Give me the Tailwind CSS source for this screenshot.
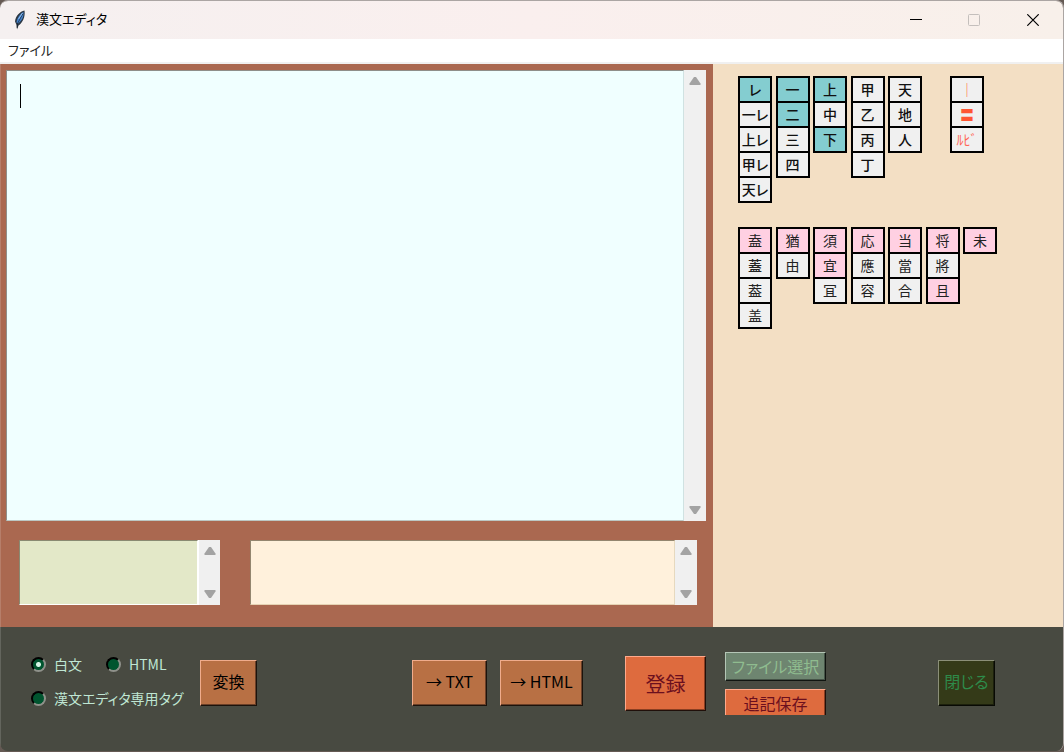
<!DOCTYPE html>
<html lang="ja">
  <head>
    <meta charset="UTF-8" />
    <meta name="viewport" content="width=device-width, initial-scale=1.0" />
    <title>漢文エディタ</title>
    <script src="https://cdn.jsdelivr.net/npm/@tailwindcss/browser@4"></script>
  </head>
  <body
    class="bg-[#655a54] font-['Noto_Sans_CJK_JP',sans-serif] [font-feature-settings:'palt']"
  >
    <div
      class="min-h-[calc(100vh-1px)] flex flex-col rounded-lg overflow-hidden border-t border-r border-[#aba5a3]"
    >
      <!-- Title bar -->
      <header
        class="h-[38px] flex items-center justify-between pl-3 bg-linear-to-r from-[#f5f0f0] via-[#faefee] to-[#f8f0ea]"
      >
        <div class="flex items-center gap-2">
          <svg class="w-4 h-5" viewBox="0 0 16 20">
            <path
              d="M12.5 0.5C8 1.5 3.5 6 3 11.5L4.5 15L5 19.5L6.5 15.5C10.5 13 13.5 7 12.5 0.5Z"
              fill="#2c3844"
            />
            <path
              d="M11.5 2C8 4 5 8 4.5 12.5L6 13.5C9.5 11 12 7 11.5 2Z"
              fill="#4383cf"
            />
            <path d="M11 3.5L5.5 13.5L5.2 18" stroke="#16202c" fill="none" stroke-width="0.7" />
            <path d="M10.5 3L6.5 9" stroke="#8fbdee" fill="none" />
          </svg>
          <h1 class="text-[13px] leading-5 pb-0.5 text-black">漢文エディタ</h1>
        </div>
        <div class="flex">
          <button aria-label="Minimize" class="w-[58px] h-9 flex items-center justify-center">
            <svg class="w-3 h-3" viewBox="0 0 12 12">
              <path d="M0 5.5H12" stroke="#000" />
            </svg>
          </button>
          <button aria-label="Maximize" disabled class="w-[58px] h-9 flex items-center justify-center">
            <svg class="w-3 h-3" viewBox="0 0 12 12">
              <rect x="0.5" y="0.5" width="11" height="11" rx="1" fill="none" stroke="#c4bfbc" />
            </svg>
          </button>
          <button aria-label="Close" class="w-[60px] h-9 flex items-center justify-center">
            <svg class="w-3 h-3" viewBox="0 0 12 12">
              <path d="M0.3 0.3L11.7 11.7M11.7 0.3L0.3 11.7" stroke="#000" stroke-width="1.2" />
            </svg>
          </button>
        </div>
      </header>

      <nav class="h-[25px] flex items-center bg-white border-b-2 border-[#f0f0f0] pl-2">
        <button class="text-[13px] leading-5 pb-0.5 text-[#222]">ファイル</button>
      </nav>

      <main class="flex">
        <!-- Editor -->
        <section class="flex-1 bg-[#aa6850] border-l border-white/15 pl-[5px] pr-[7px] pt-1.5 pb-[22px]">
          <div class="flex h-[451px]">
            <textarea
              aria-label="本文"
              class="flex-1 resize-none outline-none bg-[#f0ffff] border border-t-[#8f8f8a] border-l-[#8f8f8a] border-b-[#bcc8c4] border-r-[#d0e2e2] px-3 py-3 text-base overflow-hidden bg-[linear-gradient(#000,#000)] bg-no-repeat bg-size-[1px_24px] bg-position-[13px_13px]"
            ></textarea>
            <div class="w-[22px] bg-[#f0f0f0] flex flex-col items-center justify-between py-[7px]">
              <svg class="w-3 h-2" viewBox="0 0 12 8"><path d="M5 0H7L11.5 6.5V8H0.5V6.5Z" fill="#a3a3a3" /></svg>
              <svg class="w-3 h-2" viewBox="0 0 12 8"><path d="M5 8H7L11.5 1.5V0H0.5V1.5Z" fill="#a3a3a3" /></svg>
            </div>
          </div>

          <div class="flex gap-[30px] mt-[19px] ml-[13px] mr-[9px] h-[65px]">
            <div class="flex w-[201px]">
              <textarea
                aria-label="親文字"
                class="flex-1 min-w-0 resize-none outline-none bg-[#e3e8c8] border border-t-[#8a8a72] border-l-[#8a8a72] border-b-white border-r-white overflow-hidden"
              ></textarea>
              <div class="w-[22px] bg-[#f0f0f0] border-l border-white flex flex-col items-center justify-between py-[7px]">
                <svg class="w-3 h-2" viewBox="0 0 12 8"><path d="M5 0H7L11.5 6.5V8H0.5V6.5Z" fill="#a3a3a3" /></svg>
                <svg class="w-3 h-2" viewBox="0 0 12 8"><path d="M5 8H7L11.5 1.5V0H0.5V1.5Z" fill="#a3a3a3" /></svg>
              </div>
            </div>
            <div class="flex flex-1">
              <textarea
                aria-label="ルビ"
                class="flex-1 min-w-0 resize-none outline-none bg-[#fff1dc] border border-t-[#93866f] border-l-[#93866f] border-b-[#e6d3b4] border-r-[#e6d9bf] overflow-hidden"
              ></textarea>
              <div class="w-[22px] bg-[#f0f0f0] flex flex-col items-center justify-between py-[7px]">
                <svg class="w-3 h-2" viewBox="0 0 12 8"><path d="M5 0H7L11.5 6.5V8H0.5V6.5Z" fill="#a3a3a3" /></svg>
                <svg class="w-3 h-2" viewBox="0 0 12 8"><path d="M5 8H7L11.5 1.5V0H0.5V1.5Z" fill="#a3a3a3" /></svg>
              </div>
            </div>
          </div>
        </section>

        <!-- Kanbun marks -->
        <section
          class="w-[350px] bg-[#f3dfc4] pl-[25px] pt-3 flex flex-col gap-6 text-sm font-medium text-[#111] [&_button]:w-[34px] [&_button]:h-[27px] [&_button]:border-2 [&_button]:border-black [&_button]:-mb-0.5 [&_button]:pb-0.5 [&_button]:leading-5 [&_button]:overflow-hidden [&_button]:whitespace-nowrap"
        >
          <div class="flex items-start">
            <div class="w-[184px] flex items-start justify-between">
              <div class="flex flex-col pb-0.5">
                <button class="bg-[#84cdd0]">レ</button>
                <button class="bg-[#f0f0f0]">一レ</button>
                <button class="bg-[#f0f0f0]">上レ</button>
                <button class="bg-[#f0f0f0]">甲レ</button>
                <button class="bg-[#f0f0f0]">天レ</button>
              </div>
              <div class="flex flex-col">
                <button class="bg-[#84cdd0]">一</button>
                <button class="bg-[#84cdd0]">二</button>
                <button class="bg-[#f0f0f0]">三</button>
                <button class="bg-[#f0f0f0]">四</button>
              </div>
              <div class="flex flex-col">
                <button class="bg-[#84cdd0]">上</button>
                <button class="bg-[#f0f0f0]">中</button>
                <button class="bg-[#84cdd0]">下</button>
              </div>
              <div class="flex flex-col">
                <button class="bg-[#f0f0f0]">甲</button>
                <button class="bg-[#f0f0f0]">乙</button>
                <button class="bg-[#f0f0f0]">丙</button>
                <button class="bg-[#f0f0f0]">丁</button>
              </div>
              <div class="flex flex-col">
                <button class="bg-[#f0f0f0]">天</button>
                <button class="bg-[#f0f0f0]">地</button>
                <button class="bg-[#f0f0f0]">人</button>
              </div>
            </div>
            <div class="flex flex-col ml-7">
              <button class="bg-[#f0f0f0] text-[#ff7a50]">｜</button>
              <button class="bg-[#f0f0f0] text-[#ff5533] font-black">〓</button>
              <button class="bg-[#f0f0f0] text-[#ff6555] font-normal">ﾙﾋﾞ</button>
            </div>
          </div>

          <div class="w-[259px] flex items-start justify-between font-normal text-[#222]">
            <div class="flex flex-col">
              <button class="bg-[#ffd0e2]">盍</button>
              <button class="bg-[#f0f0f0] font-medium">蓋</button>
              <button class="bg-[#f0f0f0]">葢</button>
              <button class="bg-[#f0f0f0]">盖</button>
            </div>
            <div class="flex flex-col">
              <button class="bg-[#ffd0e2]">猶</button>
              <button class="bg-[#f0f0f0]">由</button>
            </div>
            <div class="flex flex-col">
              <button class="bg-[#ffd0e2]">須</button>
              <button class="bg-[#ffd0e2]">宜</button>
              <button class="bg-[#f0f0f0]">冝</button>
            </div>
            <div class="flex flex-col">
              <button class="bg-[#ffd0e2]">応</button>
              <button class="bg-[#f0f0f0]">應</button>
              <button class="bg-[#f0f0f0]">容</button>
            </div>
            <div class="flex flex-col">
              <button class="bg-[#ffd0e2]">当</button>
              <button class="bg-[#f0f0f0]">當</button>
              <button class="bg-[#f0f0f0]">合</button>
            </div>
            <div class="flex flex-col">
              <button class="bg-[#ffd0e2]">将</button>
              <button class="bg-[#f0f0f0]">將</button>
              <button class="bg-[#ffd0e2]">且</button>
            </div>
            <div class="flex flex-col">
              <button class="bg-[#ffd0e2]">未</button>
            </div>
          </div>
        </section>
      </main>

      <!-- Actions -->
      <footer
        class="flex-1 flex items-start bg-[#484a41] border-l border-white/15 pt-[25px] pl-[30px] pr-[68px]"
      >
        <div class="flex-1 flex items-center h-[62px]">
          <div class="w-[169px] pb-1 flex flex-col gap-2.5 text-sm leading-6 text-[#bfe6d3]">
            <div class="flex gap-6">
              <label class="flex items-center gap-2">
                <input
                  type="radio"
                  name="format"
                  checked
                  class="appearance-none w-[15px] h-[15px] rounded-full bg-[#00552f] border-2 border-t-black border-l-black border-b-[#8f918a] border-r-[#8f918a] checked:bg-[radial-gradient(circle,#d5f5e5_2px,#00552f_3px)]"
                />
                白文
              </label>
              <label class="flex items-center gap-2">
                <input
                  type="radio"
                  name="format"
                  class="appearance-none w-[15px] h-[15px] rounded-full bg-[#00552f] border-2 border-t-black border-l-black border-b-[#8f918a] border-r-[#8f918a] checked:bg-[radial-gradient(circle,#d5f5e5_2px,#00552f_3px)]"
                />
                HTML
              </label>
            </div>
            <label class="flex items-center gap-2">
              <input
                type="radio"
                name="format"
                class="appearance-none w-[15px] h-[15px] rounded-full bg-[#00552f] border-2 border-t-black border-l-black border-b-[#8f918a] border-r-[#8f918a] checked:bg-[radial-gradient(circle,#d5f5e5_2px,#00552f_3px)]"
              />
              漢文エディタ専用タグ
            </label>
          </div>
          <button
            class="w-[57px] h-[46px] pb-1 bg-[#b87044] border border-t-[#f0ac8c] border-l-[#f0ac8c] border-b-[#1c130c] border-r-[#1c130c] shadow-[inset_-1px_-1px_0_#6b4028] text-base text-black"
          >
            変換
          </button>
        </div>
        <div class="flex items-center h-[62px]">
          <button
            class="w-[75px] h-[46px] pb-1 bg-[#b87044] border border-t-[#f0ac8c] border-l-[#f0ac8c] border-b-[#1c130c] border-r-[#1c130c] shadow-[inset_-1px_-1px_0_#6b4028] text-base text-black [font-feature-settings:normal]"
          >
            → TXT
          </button>
          <button
            class="w-[83px] h-[46px] ml-[13px] pb-1 bg-[#b87044] border border-t-[#f0ac8c] border-l-[#f0ac8c] border-b-[#1c130c] border-r-[#1c130c] shadow-[inset_-1px_-1px_0_#6b4028] text-base text-black [font-feature-settings:normal]"
          >
            → HTML
          </button>
        </div>
        <div class="flex items-center h-[63px]">
          <button
            class="w-[81px] h-[55px] ml-[42px] bg-[#de6b3e] border border-t-[#ffa98c] border-l-[#ffa98c] border-b-[#20100a] border-r-[#20100a] shadow-[inset_-1px_-1px_0_#8a3f22] text-xl text-[#6b0f1e]"
          >
            登録
          </button>
          <div class="flex flex-col gap-2 ml-[19px]">
            <button
              disabled
              class="w-[101px] h-[29px] pb-0.5 bg-[#6e8570] border border-t-[#b4c6b6] border-l-[#b4c6b6] border-b-[#101410] border-r-[#101410] shadow-[inset_-1px_-1px_0_#465448] text-base leading-5 text-[#8fbc8f]"
            >
              ファイル選択
            </button>
            <button
              class="w-[101px] h-[26px] bg-[#de6b3e] border border-b-0 border-t-[#ffa98c] border-l-[#ffa98c] border-r-[#20100a] shadow-[inset_-1px_0_0_#8a3f22] text-base leading-5 text-[#6b0f1e]"
            >
              追記保存
            </button>
          </div>
        </div>
        <div class="flex items-center h-[62px]">
          <button
            class="w-[57px] h-[46px] ml-28 pb-1 bg-[#343a18] border border-t-[#8b8f78] border-l-[#8b8f78] border-b-[#080a04] border-r-[#080a04] shadow-[inset_-1px_-1px_0_#1c200c] text-base text-[#2e8b4a]"
          >
            閉じる
          </button>
        </div>
      </footer>
    </div>
  </body>
</html>
